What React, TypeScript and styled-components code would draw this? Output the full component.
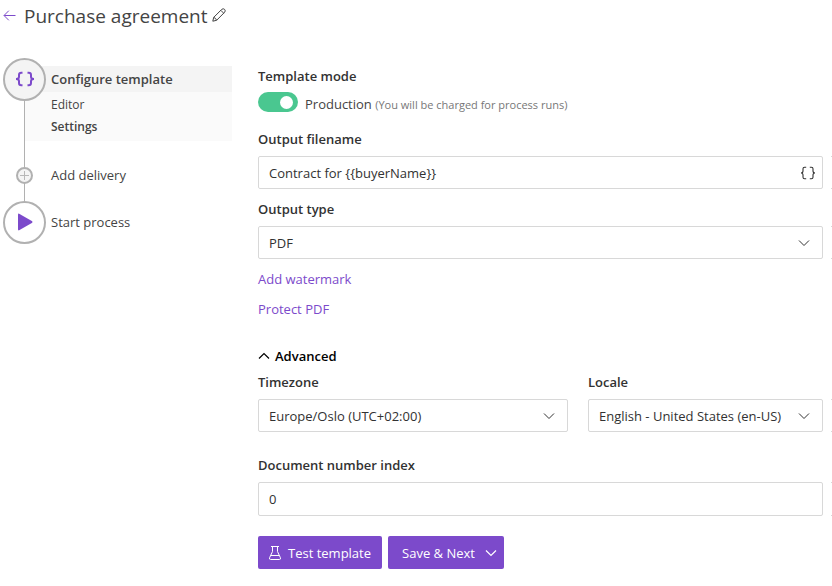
import React, { useState } from "react";
import styled, { createGlobalStyle, css } from "styled-components";

const color = {
  purple: "#7c4acb",
  green: "#4ac790",
  text: "#444444",
  strong: "#323232",
  muted: "#777777",
  border: "#d8d8d8",
  rail: "#b1b1b1",
};

const GlobalStyle = createGlobalStyle`
  *, *::before, *::after { box-sizing: border-box; }
  body {
    margin: 0;
    background: #fff;
    color: ${color.text};
    font-family: "Open Sans", "Noto Sans", sans-serif;
    font-size: 13px;
    line-height: 20px;
  }
  button, input, select { font: inherit; color: inherit; }
  svg { display: block; flex: none; }
`;

const Page = styled.div`
  overflow-x: hidden;
  padding-bottom: 16px;
`;

const Header = styled.header`
  display: flex;
  align-items: center;
  height: 32px;
  padding-left: 3px;
`;

const Title = styled.h1`
  margin: 0 5px 0 7px;
  font-size: 19px;
  font-weight: 400;
  line-height: 32px;
`;

const IconButton = styled.button`
  display: flex;
  padding: 0;
  border: 0;
  background: none;
  cursor: pointer;
`;

const RenameButton = styled(IconButton)`
  padding-bottom: 2px;
`;

const BackLink = styled.a`
  color: ${color.purple};
`;

const Columns = styled.div`
  display: flex;
  align-items: flex-start;
  gap: 26px;
  padding-top: 34px;
`;

const Steps = styled.ol`
  flex: none;
  width: 208px;
  margin: 0 0 0 24px;
  padding: 0;
  border-left: 1px solid ${color.rail};
  list-style: none;
`;

const Step = styled.li`
  & + & { margin-top: 21px; }
`;

const StepLink = styled.a<{ $current?: boolean }>`
  display: flex;
  align-items: center;
  gap: 5px;
  height: 26px;
  color: inherit;
  text-decoration: none;
  ${(p) => p.$current && css`
    background: #f4f4f4;
    font-weight: 600;
  `}
`;

const MarkerSlot = styled.span`
  display: flex;
  justify-content: center;
  flex: none;
  width: 43px;
  margin-left: -22px;
`;

const Marker = styled.span<{ $small?: boolean; $shaded?: boolean }>`
  display: flex;
  align-items: center;
  justify-content: center;
  flex: none;
  width: ${(p) => (p.$small ? 17 : 43)}px;
  height: ${(p) => (p.$small ? 17 : 43)}px;
  border: 2px solid ${color.rail};
  border-radius: 50%;
  background: ${(p) => (p.$shaded ? "#f4f4f4" : "#fff")};
  color: ${color.purple};
`;

const SubSteps = styled.ul`
  margin: 0;
  padding: 2px 0 3px 26px;
  background: #fafafa;
  list-style: none;
  font-size: 12px;
  line-height: 22px;
`;

const SubLink = styled.a<{ $current?: boolean }>`
  color: inherit;
  font-weight: ${(p) => (p.$current ? 600 : 400)};
  text-decoration: none;
`;

const Form = styled.form`
  flex: 1;
  min-width: 0;
`;

const Label = styled.label`
  display: block;
  color: ${color.strong};
  font-weight: 600;
`;

const ModeHeading = styled.h2`
  margin: 0 0 6px;
  color: ${color.strong};
  font-size: 13px;
  font-weight: 600;
  line-height: 20px;
`;

const Mode = styled.label`
  display: flex;
  align-items: center;
  gap: 7px;
  height: 20px;
  margin-bottom: 17px;
`;

const Switch = styled.input`
  appearance: none;
  display: flex;
  align-items: center;
  flex: none;
  width: 40px;
  height: 20px;
  margin: 0;
  padding: 0 5px;
  border-radius: 10px;
  background: #999;
  cursor: pointer;
  &::before {
    content: "";
    width: 13px;
    height: 13px;
    border-radius: 50%;
    background: #fff;
  }
  &:checked {
    justify-content: flex-end;
    background: ${color.green};
  }
`;

const ModeText = styled.span`
  padding-top: 4px;
`;

const Hint = styled.small`
  color: ${color.muted};
  font-size: 11px;
`;

const FieldRow = styled.div<{ $after?: number }>`
  display: grid;
  grid-template-columns: minmax(0, 1fr) 1px;
  gap: 8px;
  margin-bottom: ${(p) => p.$after ?? 10}px;
`;

const Pair = styled.div`
  display: grid;
  grid-template-columns: minmax(0, 310fr) minmax(0, 235fr);
  gap: 20px;
`;

const Field = styled.div<{ $height?: number }>`
  display: grid;
  grid-template-rows: 20px ${(p) => p.$height ?? 33}px;
  gap: 7px;
`;

/* Leading edge of the panel that continues past the window. */
const NextEdge = styled.span<{ $height?: number }>`
  align-self: end;
  height: ${(p) => p.$height ?? 33}px;
  border: solid ${color.border};
  border-width: 1px 0;
`;

const Box = styled.div`
  display: grid;
  align-items: center;
  color: ${color.strong};
  & > * { grid-area: 1 / 1; }
  & > svg, & > button {
    justify-self: end;
    margin-right: 13px;
    pointer-events: none;
  }
  & > button {
    margin-right: 7px;
    pointer-events: auto;
  }
`;

const control = css`
  width: 100%;
  height: 100%;
  margin: 0;
  padding: 0 36px 0 10px;
  border: 1px solid ${color.border};
  border-radius: 2px;
  background: #fff;
  outline-color: ${color.purple};
`;

const TextInput = styled.input`
  ${control}
`;

const Select = styled.select`
  ${control}
  appearance: none;
`;

const Links = styled.div`
  display: flex;
  flex-direction: column;
  align-items: flex-start;
  gap: 10px;
  margin-bottom: 27px;
`;

const ActionLink = styled.a`
  color: ${color.purple};
  text-decoration: none;
`;

const Disclosure = styled.button`
  display: flex;
  align-items: center;
  gap: 5px;
  margin-bottom: 6px;
  padding: 0;
  border: 0;
  background: none;
  color: #000;
  font-weight: 600;
  cursor: pointer;
`;

const Actions = styled.div`
  display: flex;
  gap: 6px;
`;

const PrimaryButton = styled.button<{ $menu?: boolean }>`
  display: flex;
  align-items: center;
  justify-content: space-between;
  gap: 7px;
  min-width: ${(p) => (p.$menu ? 116 : 124)}px;
  height: 33px;
  padding: ${(p) => (p.$menu ? "0 7px 0 14px" : "0 11px")};
  border: 0;
  border-radius: 2px;
  background: ${color.purple};
  color: #fff;
  font-weight: 500;
  cursor: pointer;
`;

const Chevron = ({ up = false, width = 1 }: { up?: boolean; width?: number }) => (
  <svg width="12" height="12" viewBox="0 0 12 12" fill="none" stroke="currentColor" strokeWidth={width} aria-hidden="true">
    <path d={up ? "M1 8.5 6 3.5 11 8.5" : "M1 3.5 6 8.5 11 3.5"} />
  </svg>
);

const Braces = ({ bold = false }: { bold?: boolean }) => (
  <svg
    width={bold ? 20 : 16}
    height={bold ? 16 : 14}
    viewBox={bold ? "0 0 20 16" : "0 0 16 14"}
    fill="none"
    stroke="currentColor"
    strokeWidth={bold ? 2 : 1.1}
    aria-hidden="true"
  >
    {bold ? (
      <path d="M7.5 1.8H6.3Q4 1.8 4 4V5.8Q4 8 1 8Q4 8 4 10.2V12Q4 14.2 6.3 14.2H7.5M12.5 1.8H13.7Q16 1.8 16 4V5.8Q16 8 19 8Q16 8 16 10.2V12Q16 14.2 13.7 14.2H12.5" />
    ) : (
      <path d="M6.2 1.2H4.6Q3 1.2 3 2.8V5Q3 7 1 7Q3 7 3 9V11.2Q3 12.8 4.6 12.8H6.2M9.8 1.2H11.4Q13 1.2 13 2.8V5Q13 7 15 7Q13 7 13 9V11.2Q13 12.8 11.4 12.8H9.8" />
    )}
  </svg>
);

const BackIcon = () => (
  <svg width="14" height="12" viewBox="0 0 14 12" fill="none" stroke="currentColor" strokeWidth="1" aria-hidden="true">
    <path d="M12.5 5.5H1.2M5.8 .7 1 5.5l4.8 4.8" />
  </svg>
);

const PencilIcon = () => (
  <svg width="14" height="14" viewBox="0 0 14 14" fill="none" stroke="currentColor" strokeWidth="1" aria-hidden="true">
    <path d="M.8 13.2 1.7 9.4 9.7 1.4Q11.2 .1 12.6 1.4Q13.9 2.8 12.6 4.3L4.6 12.3ZM8.8 2.3 11.7 5.2M1.7 9.4Q3.9 9.9 4.6 12.3" />
  </svg>
);

const PlusIcon = () => (
  <svg width="9" height="9" viewBox="0 0 9 9" stroke="#b8b8b8" aria-hidden="true">
    <path d="M4.5 0V9M0 4.5H9" />
  </svg>
);

const PlayIcon = () => (
  <svg width="16" height="18" viewBox="0 0 16 18" fill="currentColor" aria-hidden="true">
    <path d="M1 1.7Q1 0 2.6 .9L14.8 8Q16.2 9 14.8 10L2.6 17.1Q1 18 1 16.3Z" />
  </svg>
);

const FlaskIcon = () => (
  <svg width="12" height="14" viewBox="0 0 12 14" fill="none" stroke="currentColor" strokeWidth="1" aria-hidden="true">
    <path d="M2 .5H10M3.5 .5V5.5L.6 11.7Q0 13.5 1.6 13.5H10.4Q12 13.5 11.4 11.7L8.5 5.5V.5M2 9.5H10" />
  </svg>
);

export default function App() {
  const [production, setProduction] = useState(true);
  const [advanced, setAdvanced] = useState(true);

  return (
    <>
      <GlobalStyle />
      <Page>
        <Header>
          <BackLink href="#back" aria-label="Back"><BackIcon /></BackLink>
          <Title>Purchase agreement</Title>
          <RenameButton type="button" aria-label="Rename template"><PencilIcon /></RenameButton>
        </Header>
        <Columns>
          <Steps>
            <Step>
              <StepLink href="#configure" $current>
                <MarkerSlot><Marker $shaded><Braces bold /></Marker></MarkerSlot>
                Configure template
              </StepLink>
              <SubSteps>
                <li><SubLink href="#editor">Editor</SubLink></li>
                <li><SubLink href="#settings" $current>Settings</SubLink></li>
              </SubSteps>
            </Step>
            <Step>
              <StepLink href="#delivery">
                <MarkerSlot><Marker $small $shaded><PlusIcon /></Marker></MarkerSlot>
                Add delivery
              </StepLink>
            </Step>
            <Step>
              <StepLink href="#start">
                <MarkerSlot><Marker><PlayIcon /></Marker></MarkerSlot>
                Start process
              </StepLink>
            </Step>
          </Steps>
          <Form onSubmit={(e) => e.preventDefault()}>
            <ModeHeading>Template mode</ModeHeading>
            <Mode>
              <Switch type="checkbox" role="switch" checked={production} onChange={(e) => setProduction(e.target.checked)} />
              <ModeText>Production <Hint>(You will be charged for process runs)</Hint></ModeText>
            </Mode>
            <FieldRow>
              <Field>
                <Label htmlFor="filename">Output filename</Label>
                <Box>
                  <TextInput id="filename" defaultValue="Contract for {{buyerName}}" />
                  <IconButton type="button" aria-label="Insert variable"><Braces /></IconButton>
                </Box>
              </Field>
              <NextEdge />
            </FieldRow>
            <FieldRow>
              <Field>
                <Label htmlFor="type">Output type</Label>
                <Box>
                  <Select id="type"><option>PDF</option></Select>
                  <Chevron />
                </Box>
              </Field>
              <NextEdge />
            </FieldRow>
            <Links>
              <ActionLink href="#watermark">Add watermark</ActionLink>
              <ActionLink href="#protect">Protect PDF</ActionLink>
            </Links>
            <Disclosure type="button" aria-expanded={advanced} onClick={() => setAdvanced(!advanced)}>
              <Chevron up={advanced} width={1.2} />
              Advanced
            </Disclosure>
            {advanced && (
              <>
                <FieldRow $after={23}>
                  <Pair>
                    <Field>
                      <Label htmlFor="timezone">Timezone</Label>
                      <Box>
                        <Select id="timezone"><option>Europe/Oslo (UTC+02:00)</option></Select>
                        <Chevron />
                      </Box>
                    </Field>
                    <Field>
                      <Label htmlFor="locale">Locale</Label>
                      <Box>
                        <Select id="locale"><option>English - United States (en-US)</option></Select>
                        <Chevron />
                      </Box>
                    </Field>
                  </Pair>
                  <NextEdge />
                </FieldRow>
                <FieldRow $after={20}>
                  <Field $height={34}>
                    <Label htmlFor="index">Document number index</Label>
                    <Box><TextInput id="index" inputMode="numeric" defaultValue="0" /></Box>
                  </Field>
                  <NextEdge $height={34} />
                </FieldRow>
              </>
            )}
            <Actions>
              <PrimaryButton type="button"><FlaskIcon />Test template</PrimaryButton>
              <PrimaryButton type="submit" $menu>Save &amp; Next<Chevron width={1.2} /></PrimaryButton>
            </Actions>
          </Form>
        </Columns>
      </Page>
    </>
  );
}
